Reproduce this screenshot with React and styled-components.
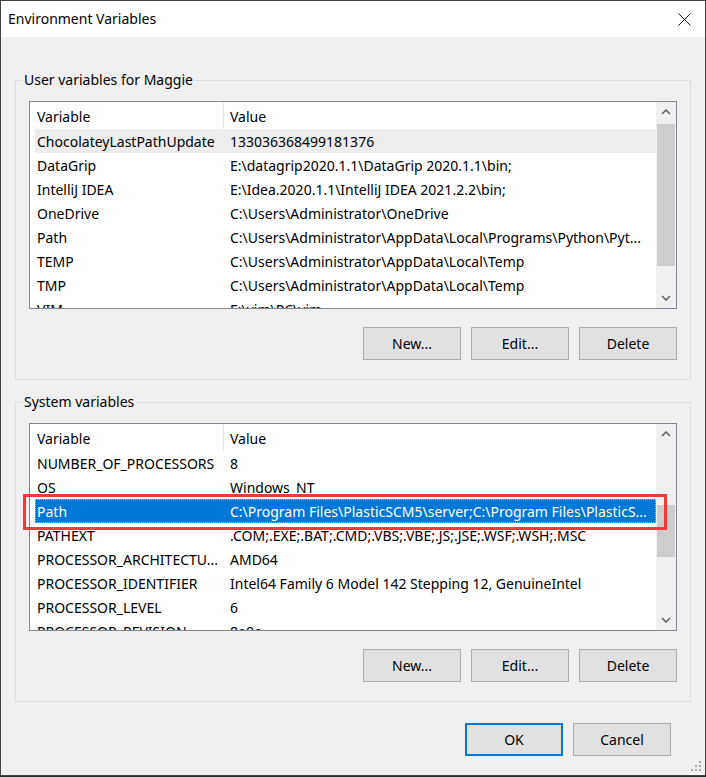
import styled, { createGlobalStyle } from 'styled-components';

const GlobalStyle = createGlobalStyle`
  html, body {
    margin: 0;
    padding: 0;
    background: #2b2b2b;
  }
  * {
    box-sizing: border-box;
  }
`;

const userVars = [
  ['ChocolateyLastPathUpdate', '133036368499181376'],
  ['DataGrip', 'E:\\datagrip2020.1.1\\DataGrip 2020.1.1\\bin;'],
  ['IntelliJ IDEA', 'E:\\Idea.2020.1.1\\IntelliJ IDEA 2021.2.2\\bin;'],
  ['OneDrive', 'C:\\Users\\Administrator\\OneDrive'],
  ['Path', 'C:\\Users\\Administrator\\AppData\\Local\\Programs\\Python\\Pyt...'],
  ['TEMP', 'C:\\Users\\Administrator\\AppData\\Local\\Temp'],
  ['TMP', 'C:\\Users\\Administrator\\AppData\\Local\\Temp'],
  ['VIM', 'E:\\vim\\PC\\vim'],
];

const systemVars = [
  ['NUMBER_OF_PROCESSORS', '8'],
  ['OS', 'Windows_NT'],
  ['Path', 'C:\\Program Files\\PlasticSCM5\\server;C:\\Program Files\\PlasticS...'],
  ['PATHEXT', '.COM;.EXE;.BAT;.CMD;.VBS;.VBE;.JS;.JSE;.WSF;.WSH;.MSC'],
  ['PROCESSOR_ARCHITECTU...', 'AMD64'],
  ['PROCESSOR_IDENTIFIER', 'Intel64 Family 6 Model 142 Stepping 12, GenuineIntel'],
  ['PROCESSOR_LEVEL', '6'],
  ['PROCESSOR_REVISION', '8e0c'],
];

const Dialog = styled.div`
  position: relative;
  width: 706px;
  height: 776px;
  border: 1px solid #444;
  background: #f0f0f0;
  font-family: "Segoe UI", "Noto Sans", sans-serif;
  font-size: 14px;
  color: #000;
  display: flex;
  flex-direction: column;
`;

const TitleBar = styled.div`
  height: 36px;
  background: #fff;
  display: flex;
  align-items: center;
  justify-content: space-between;
  padding: 0 14px 0 7px;
`;

const Title = styled.div`
  line-height: 20px;
`;

const Close = styled.div`
  width: 14px;
  height: 14px;
  display: flex;
  align-items: center;
  justify-content: center;
`;

const Client = styled.div`
  flex: 1;
  padding-top: 33px;
  display: flex;
  flex-direction: column;
`;

const Group = styled.fieldset`
  margin: ${p => (p.$first ? '0' : '12px')} 14px 0;
  padding: 0 13px 19px;
  border: 1px solid #dcdcdc;
  min-width: 0;
`;

const Legend = styled.legend`
  margin-left: -7px;
  padding: 0 2px;
  line-height: 20px;
`;

const ListFrame = styled.div`
  position: relative;
  margin-top: 11px;
`;

const ListBox = styled.div`
  height: 208px;
  border: 1px solid #828790;
  background: #fff;
  display: flex;
  overflow: hidden;
`;

const Viewport = styled.div`
  flex: 1;
  overflow: hidden;
`;

const Header = styled.div`
  height: 27px;
  display: flex;
  align-items: center;
`;

const HeaderCell = styled.div`
  height: 100%;
  display: flex;
  align-items: center;
  padding-top: 1px;
  ${p => (p.$first
    ? 'width: 194px; padding-left: 7px; border-right: 1px solid #e5e5e5;'
    : 'flex: 1; padding-left: 6px;')}
`;

const Row = styled.div`
  position: relative;
  height: 24px;
  margin-left: 5px;
  display: flex;
  align-items: center;
  white-space: nowrap;
  background: ${p => (p.$selected ? '#0078d7' : p.$hover ? '#ededed' : 'transparent')};
  color: ${p => (p.$selected ? '#fff' : '#000')};
  outline: ${p => (p.$selected ? '1px dotted #f5b56e' : 'none')};
  outline-offset: -1px;
`;

const NameCell = styled.div`
  width: 188px;
  padding-left: 2px;
  overflow: hidden;
`;

const ValueCell = styled.div`
  flex: 1;
  padding-left: 7px;
  overflow: hidden;
`;

const Scrollbar = styled.div`
  width: 20px;
  background: #f0f0f0;
  display: flex;
  flex-direction: column;
`;

const ScrollButton = styled.div`
  height: 20px;
  display: flex;
  align-items: center;
  justify-content: center;
`;

const Track = styled.div`
  flex: 1;
  padding: 0 1px;
`;

const Thumb = styled.div`
  background: #cdcdcd;
`;

const ButtonRow = styled.div`
  margin-top: 18px;
  display: flex;
  justify-content: flex-end;
  gap: 10px;
`;

const Button = styled.div`
  width: 98px;
  height: 33px;
  background: #e1e1e1;
  border: ${p => (p.$default ? '2px solid #0078d7' : '1px solid #adadad')};
  display: flex;
  align-items: center;
  justify-content: center;
  line-height: 20px;
`;

const Footer = styled.div`
  margin-top: 21px;
  padding-right: 34px;
  display: flex;
  justify-content: flex-end;
  gap: 10px;
`;

const Annotation = styled.div`
  position: absolute;
  left: -6px;
  top: 71px;
  width: 644px;
  height: 36px;
  border: 3px solid #ee3b3b;
  pointer-events: none;
`;

const Grip = styled.svg`
  position: absolute;
  right: 3px;
  bottom: 3px;
`;

const Chevron = ({ down }) => (
  <svg width="10" height="6" viewBox="0 0 10 6">
    <polyline
      points={down ? '1,1 5,5 9,1' : '1,5 5,1 9,5'}
      fill="none"
      stroke="#606060"
      strokeWidth="1.5"
    />
  </svg>
);

function VarList({ items, selected, hover, thumbTop, thumbHeight, annotate }) {
  return (
    <ListFrame>
      <ListBox>
        <Viewport>
          <Header>
            <HeaderCell $first>Variable</HeaderCell>
            <HeaderCell>Value</HeaderCell>
          </Header>
          {items.map(([name, value], i) => (
            <Row key={name} $selected={i === selected} $hover={i === hover}>
              <NameCell>{name}</NameCell>
              <ValueCell>{value}</ValueCell>
            </Row>
          ))}
        </Viewport>
        <Scrollbar>
          <ScrollButton><Chevron /></ScrollButton>
          <Track>
            <Thumb style={{ marginTop: thumbTop, height: thumbHeight }} />
          </Track>
          <ScrollButton><Chevron down /></ScrollButton>
        </Scrollbar>
      </ListBox>
      {annotate && <Annotation />}
    </ListFrame>
  );
}

export default function App() {
  return (
    <>
      <GlobalStyle />
      <Dialog>
        <TitleBar>
          <Title>Environment Variables</Title>
          <Close>
            <svg width="13" height="13" viewBox="0 0 13 13">
              <path d="M0.5 0.5 L12.5 12.5 M12.5 0.5 L0.5 12.5" stroke="#1a1a1a" strokeWidth="1" />
            </svg>
          </Close>
        </TitleBar>
        <Client>
          <Group $first>
            <Legend>User variables for Maggie</Legend>
            <VarList items={userVars} hover={0} thumbTop={2} thumbHeight={142} />
            <ButtonRow>
              <Button>New...</Button>
              <Button>Edit...</Button>
              <Button>Delete</Button>
            </ButtonRow>
          </Group>
          <Group>
            <Legend>System variables</Legend>
            <VarList items={systemVars} selected={2} thumbTop={61} thumbHeight={52} annotate />
            <ButtonRow>
              <Button>New...</Button>
              <Button>Edit...</Button>
              <Button>Delete</Button>
            </ButtonRow>
          </Group>
          <Footer>
            <Button $default>OK</Button>
            <Button>Cancel</Button>
          </Footer>
        </Client>
        <Grip width="11" height="11" viewBox="0 0 11 11">
          <g fill="#a8a8a8">
            <rect x="8" y="0" width="2" height="2" />
            <rect x="4" y="4" width="2" height="2" />
            <rect x="8" y="4" width="2" height="2" />
            <rect x="0" y="8" width="2" height="2" />
            <rect x="4" y="8" width="2" height="2" />
            <rect x="8" y="8" width="2" height="2" />
          </g>
        </Grip>
      </Dialog>
    </>
  );
}
